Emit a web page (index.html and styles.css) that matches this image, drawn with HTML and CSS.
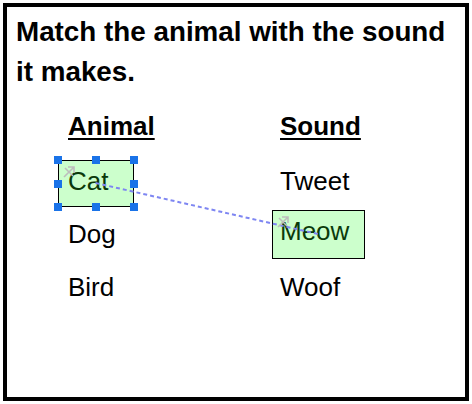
FILE: index.html
```html
<!DOCTYPE html>
<html>
<head>
<meta charset="utf-8">
<link rel="stylesheet" href="styles.css">
</head>
<body>
<div class="card">
  <h1 class="title">Match the animal with the sound it makes.</h1>
  <div class="board">
    <div class="grid">
      <div class="head head-left">Animal</div>
      <div class="head head-right">Sound</div>
      <div class="cell left"><span class="item cat selected">Cat
        <i class="h h-tl"></i><i class="h h-tc"></i><i class="h h-tr"></i>
        <i class="h h-ml"></i><i class="h h-mr"></i>
        <i class="h h-bl"></i><i class="h h-bc"></i><i class="h h-br"></i>
      </span></div>
      <div class="cell right"><span class="item">Tweet</span></div>
      <div class="cell left"><span class="item">Dog</span></div>
      <div class="cell right"><span class="item meow matched">Meow</span></div>
      <div class="cell left"><span class="item">Bird</span></div>
      <div class="cell right"><span class="item">Woof</span></div>
    </div>
    <svg class="links" width="458" height="390" viewBox="0 0 458 390">
      <line x1="88.5" y1="176" x2="311" y2="227" stroke="#7e86f2" stroke-width="2" stroke-dasharray="4 3"/>
      <g class="mark" transform="translate(56,158)">
        <path d="M1 12 L11 2 M5 2 H11 V8 M2 3 L10 11" fill="none" stroke="#bdbdbd" stroke-width="1.6"/>
      </g>
      <g class="mark" transform="translate(270,208)">
        <path d="M1 12 L11 2 M5 2 H11 V8 M2 3 L10 11" fill="none" stroke="#bdbdbd" stroke-width="1.6"/>
      </g>
    </svg>
  </div>
</div>
</body>
</html>
```

FILE: styles.css
```css
html, body {
  margin: 0;
  padding: 0;
  background: #ffffff;
}
body {
  font-family: "Liberation Sans", Arial, sans-serif;
  color: #000;
}
.card {
  position: relative;
  margin: 3px;
  width: 466px;
  height: 398px;
  box-sizing: border-box;
  border: 4px solid #000;
  padding: 5px 9px 0 9px;
}
.title {
  margin: 0;
  font-size: 27.8px;
  line-height: 40px;
  font-weight: bold;
}
.grid {
  display: grid;
  grid-template-columns: 214px 1fr;
  grid-template-rows: 44px 53px 53px 53px;
  margin-left: 42px;
  margin-top: 21px;
}
.head {
  font-size: 26px;
  font-weight: bold;
  text-decoration: underline;
  text-decoration-thickness: 2px;
  text-underline-offset: 3px;
  align-self: start;
  margin-top: -2px;
}
.head-left { padding-left: 10px; }
.head-right { padding-left: 8px; }
.cell {
  display: flex;
  align-items: center;
}
.item {
  position: relative;
  display: inline-block;
  font-size: 26px;
  line-height: 29px;
  border: 1px solid transparent;
  padding: 6px 9px 10px 9px;
}
.right .item { padding-left: 7px; }
.selected, .matched {
  background: #ccffcc;
  border-color: #000;
  color: #0a3a0a;
}
.cat {
  width: 56px;
  height: 29px;
}
.meow {
  width: 75px;
  height: 31px;
  margin-top: -4px;
}
.h {
  position: absolute;
  width: 8px;
  height: 8px;
  background: #1a73e8;
}
.h-tl { left: -5px; top: -5px; }
.h-tc { left: calc(50% - 4px); top: -5px; }
.h-tr { right: -5px; top: -5px; }
.h-ml { left: -5px; top: calc(50% - 4px); }
.h-mr { right: -5px; top: calc(50% - 4px); }
.h-bl { left: -5px; bottom: -5px; }
.h-bc { left: calc(50% - 4px); bottom: -5px; }
.h-br { right: -5px; bottom: -5px; }
.links {
  position: absolute;
  left: 0;
  top: 0;
  pointer-events: none;
}
```
